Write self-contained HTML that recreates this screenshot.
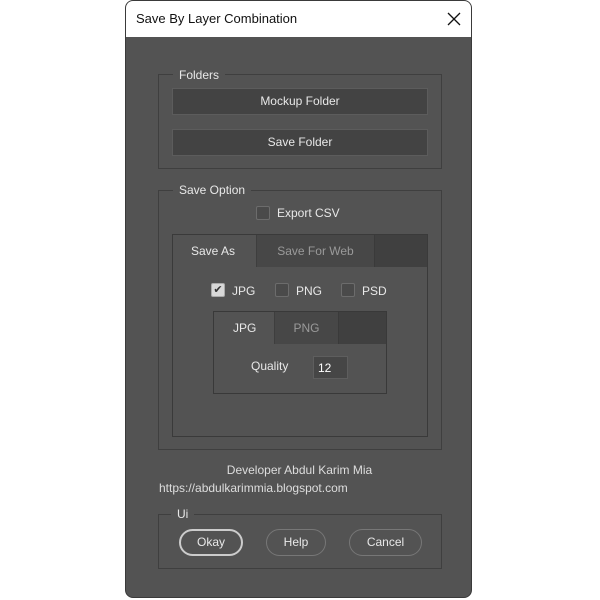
<!DOCTYPE html>
<html><head><style>
*{margin:0;padding:0;box-sizing:border-box}
body{width:600px;height:600px;background:#fff;position:relative;overflow:hidden;font-family:"Liberation Sans",sans-serif;font-size:12px;color:#e8e8e8}
.a{position:absolute}
.win{left:125px;top:0;width:347px;height:598px;background:#535353;border-radius:8px;overflow:hidden;border:1px solid #3a3a3a}
.title{left:0;top:0;width:347px;height:36px;background:#fff;color:#111;font-size:13px;padding:10px 0 0 10px}
.grp{border:1px solid #3f3f3f}
.lbl{background:#535353;padding:0 6px}
.btn{background:#434343;border:1px solid #5c5c5c;text-align:center;line-height:25px}
.cb{width:14px;height:14px;border:1px solid #6c6c6c;background:#4a4a4a;border-radius:2px}
.pill{border:1px solid #777;border-radius:14px;text-align:center;line-height:25px}
</style></head><body>
<div class="a win">
<div class="a title">Save By Layer Combination<svg class="a" style="right:12px;top:11px" width="14" height="14" viewBox="0 0 14 14"><path d="M1 1L13 13M13 1L1 13" stroke="#111" stroke-width="1.3"/></svg></div>
<div class="a grp" style="left:32px;top:73px;width:284px;height:95px"></div>
<div class="a lbl" style="left:47px;top:67px">Folders</div>
<div class="a btn" style="left:46px;top:87px;width:256px;height:27px">Mockup Folder</div>
<div class="a btn" style="left:46px;top:128px;width:256px;height:27px">Save Folder</div>
<div class="a grp" style="left:32px;top:189px;width:284px;height:260px"></div>
<div class="a lbl" style="left:47px;top:182px">Save Option</div>
<div class="a cb" style="left:130px;top:205px"></div>
<div class="a" style="left:151px;top:205px">Export CSV</div>
<div class="a" style="left:46px;top:233px;width:256px;height:203px;border:1px solid #3a3a3a;background:#535353"></div>
<div class="a" style="left:130px;top:234px;width:118px;height:32px;background:#474747;border-left:1px solid #3e3e3e;color:#9a9a9a;text-align:center;line-height:32px">Save For Web</div>
<div class="a" style="left:248px;top:234px;width:53px;height:32px;background:#404040;border-left:1px solid #3a3a3a"></div>
<div class="a" style="left:65px;top:234px;line-height:32px">Save As</div>
<div class="a cb" style="left:85px;top:282px;background:#d8d8d8;border-color:#aaa;color:#333;font-size:11px;line-height:12px;text-align:center">✔</div>
<div class="a" style="left:106px;top:283px">JPG</div>
<div class="a cb" style="left:149px;top:282px"></div>
<div class="a" style="left:170px;top:283px">PNG</div>
<div class="a cb" style="left:215px;top:282px"></div>
<div class="a" style="left:236px;top:283px">PSD</div>
<div class="a" style="left:87px;top:310px;width:174px;height:83px;border:1px solid #393939;background:#535353"></div>
<div class="a" style="left:148px;top:311px;width:64px;height:32px;background:#474747;border-left:1px solid #3e3e3e;color:#9a9a9a;text-align:center;line-height:32px">PNG</div>
<div class="a" style="left:212px;top:311px;width:48px;height:32px;background:#404040;border-left:1px solid #3a3a3a"></div>
<div class="a" style="left:107px;top:311px;line-height:32px">JPG</div>
<div class="a" style="left:125px;top:358px">Quality</div>
<div class="a" style="left:187px;top:355px;width:35px;height:23px;background:#464646;border:1px solid #5e5e5e;padding:4px 0 0 4px;color:#fff">12</div>
<div class="a" style="left:0;top:462px;width:347px;text-align:center;color:#ddd">Developer Abdul Karim Mia</div>
<div class="a" style="left:33px;top:480px;color:#ddd">https://abdulkarimmia.blogspot.com</div>
<div class="a grp" style="left:32px;top:513px;width:284px;height:55px"></div>
<div class="a lbl" style="left:45px;top:506px">Ui</div>
<div class="a pill" style="left:53px;top:528px;width:64px;height:27px;border:2px solid #ccc;line-height:23px">Okay</div>
<div class="a pill" style="left:140px;top:528px;width:60px;height:27px">Help</div>
<div class="a pill" style="left:223px;top:528px;width:73px;height:27px">Cancel</div>
</div>
</body></html>
